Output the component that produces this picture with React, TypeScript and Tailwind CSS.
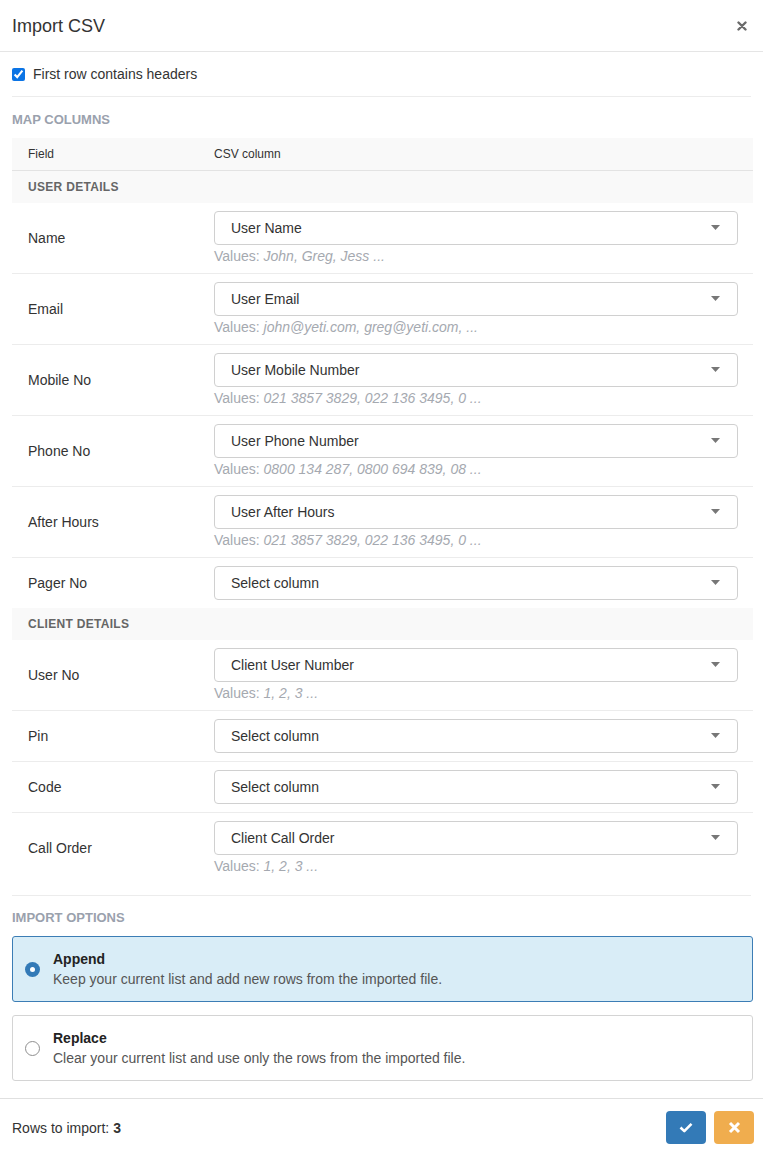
import { useState } from 'react';

type FieldRow = {
    label: string;
    value: string;
    sample?: string;
};

type Section = {
    title: string;
    rows: FieldRow[];
};

const sections: Section[] = [
    {
        title: 'User Details',
        rows: [
            { label: 'Name', value: 'User Name', sample: 'John, Greg, Jess ...' },
            { label: 'Email', value: 'User Email', sample: 'john@yeti.com, greg@yeti.com, ...' },
            { label: 'Mobile No', value: 'User Mobile Number', sample: '021 3857 3829, 022 136 3495, 0 ...' },
            { label: 'Phone No', value: 'User Phone Number', sample: '0800 134 287, 0800 694 839, 08 ...' },
            { label: 'After Hours', value: 'User After Hours', sample: '021 3857 3829, 022 136 3495, 0 ...' },
            { label: 'Pager No', value: 'Select column' },
        ],
    },
    {
        title: 'Client Details',
        rows: [
            { label: 'User No', value: 'Client User Number', sample: '1, 2, 3 ...' },
            { label: 'Pin', value: 'Select column' },
            { label: 'Code', value: 'Select column' },
            { label: 'Call Order', value: 'Client Call Order', sample: '1, 2, 3 ...' },
        ],
    },
];

const ColumnSelect = ({ value }: { value: string }) => (
    <div className="flex h-[34px] items-center justify-between rounded border border-[#d0d0d0] bg-white pl-4 pr-[17px] text-[#333]">
        <span>{value}</span>
        <svg width="9" height="5" viewBox="0 0 9 5">
            <path d="M0 0h9L4.5 5z" fill="#777" />
        </svg>
    </div>
);

const MappingRow = ({ row, last }: { row: FieldRow; last: boolean }) => (
    <div className={`flex ${last ? '' : 'border-b border-[#ececec]'}`}>
        <div className="flex w-[202px] shrink-0 items-center pl-4 text-[#333]">{row.label}</div>
        <div className="flex-1 py-2 pr-[15px]">
            <ColumnSelect value={row.value} />
            {row.sample && (
                <div className="mt-[2px] leading-[18px] text-[#a5a9b0]">
                    Values: <i>{row.sample}</i>
                </div>
            )}
        </div>
    </div>
);

const OptionCard = ({
    title,
    text,
    selected,
    onSelect,
}: {
    title: string;
    text: string;
    selected: boolean;
    onSelect: () => void;
}) => (
    <div
        onClick={onSelect}
        className={`flex cursor-pointer items-center rounded-[3px] border py-3 pl-3 ${
            selected ? 'border-[#3c7db5] bg-[#d9edf7]' : 'border-[#d4d4d4] bg-white'
        }`}
    >
        {selected ? (
            <span className="flex h-[15px] w-[15px] items-center justify-center rounded-full bg-[#337ab7]">
                <span className="h-[5px] w-[5px] rounded-full bg-white" />
            </span>
        ) : (
            <span className="h-[15px] w-[15px] rounded-full border border-[#8f8f8f] bg-white" />
        )}
        <div className="ml-[13px] leading-5">
            <div className="font-bold text-[#222]">{title}</div>
            <div className="text-[#555]">{text}</div>
        </div>
    </div>
);

export default function App() {
    const [mode, setMode] = useState<'append' | 'replace'>('append');
    const [headers, setHeaders] = useState(true);

    return (
        <div className="min-h-[1153px] w-[763px] bg-white text-sm text-[#333] [font-family:'Liberation_Sans',Arial,sans-serif]">
            <div className="flex h-[52px] items-center justify-between border-b border-[#e5e5e5] pl-3 pr-4">
                <h1 className="text-lg text-[#333]">Import CSV</h1>
                <svg width="10" height="10" viewBox="0 0 10 10">
                    <path d="M1.5 1.5l7 7M8.5 1.5l-7 7" stroke="#6b6b6b" strokeWidth="2.4" strokeLinecap="round" />
                </svg>
            </div>

            <div className="pl-3 pr-[10px]">
                <label className="mr-[2px] flex h-[45px] items-center gap-2 border-b border-[#ececec]">
                    <input
                        type="checkbox"
                        checked={headers}
                        onChange={(e) => setHeaders(e.target.checked)}
                        className="m-0 h-[13px] w-[13px] accent-[#0b74e5]"
                    />
                    <span>First row contains headers</span>
                </label>

                <div className="pb-2 pt-[14px] text-[13px] font-bold uppercase text-[#9aa1ad]">Map columns</div>

                <div>
                    <div className="flex h-[33px] items-center border-b border-[#e3e3e3] bg-[#f9f9f9] text-xs">
                        <div className="w-[202px] pl-4">Field</div>
                        <div>CSV column</div>
                    </div>
                    {sections.map((section) => (
                        <div key={section.title}>
                            <div className="flex h-8 items-center bg-[#f9f9f9] pl-4 text-xs font-bold uppercase tracking-[0.3px] text-[#666]">
                                {section.title}
                            </div>
                            {section.rows.map((row, i) => (
                                <MappingRow
                                    key={row.label}
                                    row={row}
                                    last={i === section.rows.length - 1}
                                />
                            ))}
                        </div>
                    ))}
                </div>

                <div className="mr-[2px] mt-3 border-b border-[#ececec]" />

                <div className="pb-[9px] pt-[13px] text-[13px] font-bold uppercase text-[#9aa1ad]">Import options</div>

                <div className="flex flex-col gap-[13px]">
                    <OptionCard
                        title="Append"
                        text="Keep your current list and add new rows from the imported file."
                        selected={mode === 'append'}
                        onSelect={() => setMode('append')}
                    />
                    <OptionCard
                        title="Replace"
                        text="Clear your current list and use only the rows from the imported file."
                        selected={mode === 'replace'}
                        onSelect={() => setMode('replace')}
                    />
                </div>
            </div>

            <div className="mt-[17px] flex h-[55px] items-center justify-between border-t border-[#e0e0e0] pl-3 pr-[9px] pt-[3px]">
                <div>
                    Rows to import: <b>3</b>
                </div>
                <div className="flex gap-2">
                    <button
                        type="button"
                        className="flex h-[33px] w-10 items-center justify-center rounded bg-[#337ab7] hover:bg-[#286090]"
                    >
                        <svg width="14" height="11" viewBox="0 0 14 11">
                            <path d="M1.5 5.5l3.8 3.6L12.5 1.8" fill="none" stroke="#fff" strokeWidth="2.6" strokeLinejoin="round" />
                        </svg>
                    </button>
                    <button
                        type="button"
                        className="flex h-[33px] w-10 items-center justify-center rounded bg-[#f0ad4e] hover:bg-[#ec971f]"
                    >
                        <svg width="13" height="13" viewBox="0 0 13 13">
                            <path d="M2 2l9 9M11 2l-9 9" stroke="#fff" strokeWidth="3" />
                        </svg>
                    </button>
                </div>
            </div>
        </div>
    );
}
